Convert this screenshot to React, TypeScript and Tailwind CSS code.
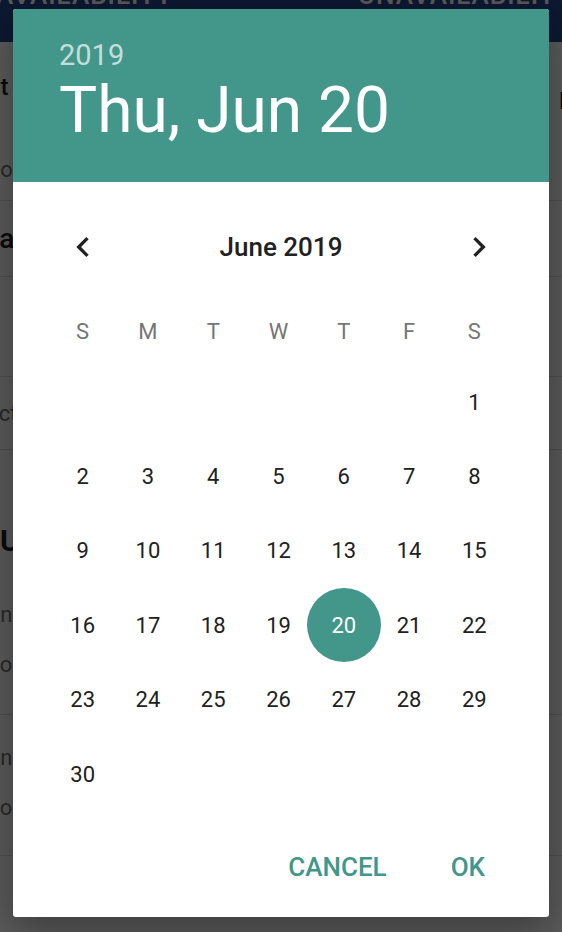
import React from "react";

const weeks: (number | null)[][] = [
  [null, null, null, null, null, null, 1],
  [2, 3, 4, 5, 6, 7, 8],
  [9, 10, 11, 12, 13, 14, 15],
  [16, 17, 18, 19, 20, 21, 22],
  [23, 24, 25, 26, 27, 28, 29],
  [30, null, null, null, null, null, null],
];

const weekdays = ["S", "M", "T", "W", "T", "F", "S"];

function ChevronLeft() {
  return (
    <svg width="40" height="40" viewBox="0 0 24 24" fill="#212121">
      <path d="M15.41 7.41L14 6l-6 6 6 6 1.41-1.41L10.83 12z" />
    </svg>
  );
}

function ChevronRight() {
  return (
    <svg width="40" height="40" viewBox="0 0 24 24" fill="#212121">
      <path d="M10 6L8.59 7.41 13.17 12l-4.58 4.59L10 18l6-6z" />
    </svg>
  );
}

function BackgroundPage() {
  return (
    <div className="flex h-[932px] flex-col overflow-hidden bg-white">
      {/* tab bar */}
      <div className="h-[42px] shrink-0 overflow-hidden bg-[#25498f]">
        <div className="-mt-[18px] flex whitespace-nowrap text-[26px] font-medium leading-[26px] tracking-[1px] text-white">
          <span className="-ml-[4px] w-[362px] shrink-0">AVAILABILITY</span>
          <span className="shrink-0">UNAVAILABILITY</span>
        </div>
      </div>

      {/* weekly hours card */}
      <div className="flex h-[159px] shrink-0 flex-col border-b border-[#e0e0e0] pt-[31px]">
        <div className="flex h-[28px] items-start whitespace-nowrap">
          <div className="h-[28px] w-[559px] shrink-0 overflow-hidden">
            <span className="-ml-[27px] inline-block text-[24px] font-medium leading-[28px] text-[#212121]">Set Your Hours</span>
          </div>
          <span className="mt-[14px] text-[24px] font-medium leading-[28px] text-[#212121]">From</span>
        </div>
        <div className="mt-[56px] h-[26px] whitespace-nowrap">
          <span className="-ml-[19px] inline-block text-[22px] leading-[26px] text-[#757575]">Work hours</span>
        </div>
      </div>

      {/* day row */}
      <div className="flex h-[76px] shrink-0 items-center border-b border-[#e0e0e0] whitespace-nowrap">
        <span className="-ml-[19px] inline-block text-[28px] font-medium text-[#212121]">Daily</span>
      </div>

      <div className="h-[100px] shrink-0 border-b border-[#e0e0e0]" />

      <div className="flex h-[73px] shrink-0 items-center border-b border-[#e0e0e0] whitespace-nowrap">
        <span className="-ml-[43px] inline-block text-[22px] text-[#757575]">Select days</span>
      </div>

      {/* unavailable section */}
      <div className="flex h-[265px] shrink-0 flex-col border-b border-[#e0e0e0] pt-[73px] whitespace-nowrap">
        <span className="text-[30px] font-bold leading-[36px] text-[#212121]">Unavailable</span>
        <span className="mt-[41px] -ml-[14px] inline-block text-[22px] leading-[30px] text-[#757575]">Annual leave</span>
        <span className="mt-[20px] -ml-[16px] inline-block text-[22px] leading-[30px] text-[#757575]">Holiday</span>
      </div>

      <div className="flex h-[141px] shrink-0 flex-col border-b border-[#e0e0e0] pt-[28px] whitespace-nowrap">
        <span className="-ml-[14px] inline-block text-[22px] leading-[30px] text-[#757575]">Annual leave</span>
        <span className="mt-[20px] -ml-[16px] inline-block text-[22px] leading-[30px] text-[#757575]">Holiday</span>
      </div>
    </div>
  );
}

function DatePickerDialog() {
  return (
    <div className="absolute left-[13px] top-[9px] flex h-[908px] w-[536px] flex-col overflow-hidden rounded-[3px] bg-white shadow-[0_12px_40px_rgba(0,0,0,0.35)]">
      {/* header */}
      <div className="h-[173px] shrink-0 bg-[#42968a] pl-[46px] pt-[32px]">
        <div className="text-[29px] leading-[29px] text-white/70">2019</div>
        <div className="mt-[9px] text-[64px] leading-[64px] text-white">Thu, Jun 20</div>
      </div>

      {/* month navigation */}
      <div className="mt-[45px] flex h-[40px] shrink-0 items-center justify-between pl-[50px] pr-[50px]">
        <ChevronLeft />
        <span className="text-[26px] font-medium text-[#212121]">June 2019</span>
        <ChevronRight />
      </div>

      {/* calendar */}
      <div className="mt-[30px] pl-[37px] pr-[42px]">
        <div className="grid h-[68px] grid-cols-7 items-center">
          {weekdays.map((d, i) => (
            <span key={i} className="text-center text-[22px] text-[#757575]">
              {d}
            </span>
          ))}
        </div>
        {weeks.map((week, wi) => (
          <div key={wi} className="grid h-[74.4px] grid-cols-7 items-center">
            {week.map((day, di) => (
              <div key={di} className="flex items-center justify-center">
                {day === 20 ? (
                  <span className="flex h-[74px] w-[74px] shrink-0 items-center justify-center rounded-full bg-[#42968a] text-[22px] text-white">
                    {day}
                  </span>
                ) : (
                  <span className="text-[22px] text-[#212121]">{day ?? ""}</span>
                )}
              </div>
            ))}
          </div>
        ))}
      </div>

      {/* actions */}
      <div className="mt-auto mb-[26px] flex h-[48px] items-center justify-end gap-[64px] pr-[64px]">
        <span className="text-[26px] font-medium text-[#42968a]">CANCEL</span>
        <span className="text-[26px] font-medium text-[#42968a]">OK</span>
      </div>
    </div>
  );
}

export default function App() {
  return (
    <div className="relative h-[932px] w-[562px] overflow-hidden font-['Roboto','Noto_Sans',sans-serif]">
      <BackgroundPage />
      <div className="absolute inset-0 bg-black/[0.647]" />
      <DatePickerDialog />
    </div>
  );
}
